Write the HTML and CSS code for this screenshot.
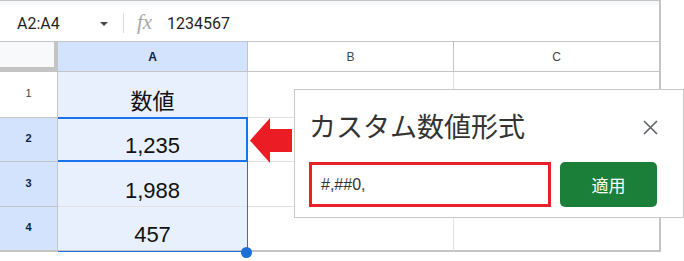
FILE: index.html
```html
<!DOCTYPE html>
<html lang="ja">
<head>
<meta charset="utf-8">
<link rel="stylesheet" href="styles.css">
</head>
<body>
<div class="page">
  <div class="sheet">
    <div class="fbar">
      <div class="namebox">
        <span class="range">A2:A4</span>
        <span class="caret"></span>
      </div>
      <span class="sep"></span>
      <span class="fx">fx</span>
      <span class="formula">1234567</span>
    </div>
    <div class="grid">
      <div class="corner"></div>
      <div class="colhead sel">A</div>
      <div class="colhead">B</div>
      <div class="colhead last">C</div>

      <div class="rowhead">1</div>
      <div class="cell cola">数値</div>
      <div class="cell"></div>
      <div class="cell last"></div>

      <div class="rowhead sel">2</div>
      <div class="cell cola">1,235</div>
      <div class="cell"></div>
      <div class="cell last"></div>

      <div class="rowhead sel">3</div>
      <div class="cell cola">1,988</div>
      <div class="cell"></div>
      <div class="cell last"></div>

      <div class="rowhead sel bottom">4</div>
      <div class="cell cola bottom">457</div>
      <div class="cell bottom"></div>
      <div class="cell last bottom"></div>
    </div>
  </div>

  <div class="range-box"></div>
  <div class="active-box"></div>
  <div class="handle"></div>

  <svg class="arrow" width="42" height="45" viewBox="0 0 42 45">
    <polygon points="0,22.5 20,0 20,11 42,11 42,34 20,34 20,45" fill="#ec1c24"/>
  </svg>

  <div class="dialog">
    <div class="dlg-head">
      <span class="dlg-title">カスタム数値形式</span>
      <svg class="close" width="15" height="15" viewBox="0 0 15 15">
        <path d="M1 1 L14 14 M14 1 L1 14" stroke="#5f6368" stroke-width="1.6" fill="none"/>
      </svg>
    </div>
    <div class="dlg-body">
      <div class="fmt-input">#,##0,</div>
      <div class="apply">適用</div>
    </div>
  </div>
</div>
</body>
</html>
```

FILE: styles.css
```css
html, body {
  margin: 0;
  padding: 0;
  background: #ffffff;
}
.page {
  position: relative;
  width: 684px;
  height: 261px;
  overflow: hidden;
  font-family: Roboto, "Liberation Sans", "Noto Sans CJK JP", sans-serif;
}
.sheet {
  width: 659px;
  border-right: 2px solid #c4c4c4;
  border-top: 1px solid #c4c4c4;
}
.fbar {
  border-top: 4px solid #f8f9fa;
  box-sizing: border-box;
  border-bottom: 1px solid #c4c4c4;
  height: 41px;
  display: flex;
  align-items: center;
}
.namebox {
  width: 108px;
  display: flex;
  align-items: center;
  justify-content: space-between;
  padding-left: 17px;
  box-sizing: border-box;
}
.range {
  font-size: 16px;
  color: #1f1f1f;
}
.caret {
  width: 0;
  height: 0;
  border-left: 4px solid transparent;
  border-right: 4px solid transparent;
  border-top: 4px solid #444746;
  margin-top: 1px;
}
.sep {
  width: 1px;
  height: 20px;
  background: #dadce0;
  margin-left: 15px;
  margin-right: 13px;
}
.fx {
  font-family: "Liberation Serif", "DejaVu Serif", serif;
  font-style: italic;
  font-size: 21px;
  color: #a8a8a8;
  width: 30px;
  margin-top: -1px;
}
.formula {
  font-size: 16px;
  color: #1f1f1f;
}
.grid {
  display: grid;
  grid-template-columns: 58px 190px 206px 205px;
  grid-template-rows: 30px 46px 44px 45px 45px;
  font-family: "Liberation Sans", Arial, "Noto Sans CJK JP", sans-serif;
}
.corner {
  background: #f8f9fa;
  border-right: 4px solid #c4c4c4;
  border-bottom: 5px solid #c4c4c4;
  box-sizing: border-box;
}
.colhead {
  display: flex;
  align-items: center;
  justify-content: center;
  font-size: 12px;
  color: #444746;
  border-right: 1px solid #c4c4c4;
  border-bottom: 1px solid #c4c4c4;
  box-sizing: border-box;
  padding-top: 1px;
}
.colhead.sel {
  background: #d3e3fd;
  color: #0b1e49;
  font-weight: bold;
}
.colhead.last, .cell.last {
  border-right: none;
}
.rowhead {
  display: flex;
  align-items: center;
  justify-content: center;
  font-size: 11px;
  color: #444746;
  border-right: 1px solid #c4c4c4;
  border-bottom: 1px solid #c4c4c4;
  box-sizing: border-box;
  padding-bottom: 3px;
}
.rowhead.sel {
  background: #d3e3fd;
  color: #0b1e49;
  font-weight: bold;
}
.cell {
  border-right: 1px solid #e2e2e2;
  border-bottom: 1px solid #e2e2e2;
  box-sizing: border-box;
  display: flex;
  align-items: flex-end;
  justify-content: center;
  font-size: 22px;
  color: #111111;
  line-height: 1;
  padding-bottom: 4px;
}
.cell.cola {
  background: #e8f0fd;
  border-right-color: #c9d7ef;
}
.cell.bottom, .rowhead.bottom {
  border-bottom: 2px solid #c4c4c4;
}
.range-box {
  position: absolute;
  left: 58px;
  top: 117px;
  width: 190px;
  height: 135px;
  border: 1px solid #1a73e8;
  border-left: none;
  box-sizing: border-box;
}
.active-box {
  position: absolute;
  left: 58px;
  top: 117px;
  width: 190px;
  height: 45px;
  border: 2px solid #1a73e8;
  border-left: none;
  box-sizing: border-box;
}
.handle {
  position: absolute;
  left: 241px;
  top: 247px;
  width: 11px;
  height: 11px;
  border-radius: 50%;
  background: #1a6fd8;
}
.arrow {
  position: absolute;
  left: 250px;
  top: 118px;
}
.dialog {
  position: absolute;
  left: 294px;
  top: 89px;
  width: 390px;
  height: 129px;
  background: #ffffff;
  border: 1px solid #c8c8c8;
  box-sizing: border-box;
  padding: 0 25px 0 14px;
  display: flex;
  flex-direction: column;
}
.dlg-head {
  display: flex;
  align-items: center;
  justify-content: space-between;
  height: 72px;
}
.dlg-title {
  font-family: "Noto Sans CJK JP", sans-serif;
  font-size: 27px;
  color: #333333;
  line-height: 1;
  margin-top: -1px;
}
.close {
  margin-top: 2px;
}
.dlg-body {
  display: flex;
  gap: 9px;
}
.fmt-input {
  width: 242px;
  height: 45px;
  border: 3px solid #e8202a;
  box-sizing: border-box;
  display: flex;
  align-items: center;
  padding-left: 9px;
  font-family: "Liberation Sans", Arial, sans-serif;
  font-size: 16px;
  color: #333333;
}
.apply {
  width: 97px;
  height: 45px;
  background: #1b7f3a;
  border-radius: 5px;
  color: #ffffff;
  display: flex;
  align-items: center;
  justify-content: center;
  font-family: "Noto Sans CJK JP", sans-serif;
  font-size: 17px;
}
```
